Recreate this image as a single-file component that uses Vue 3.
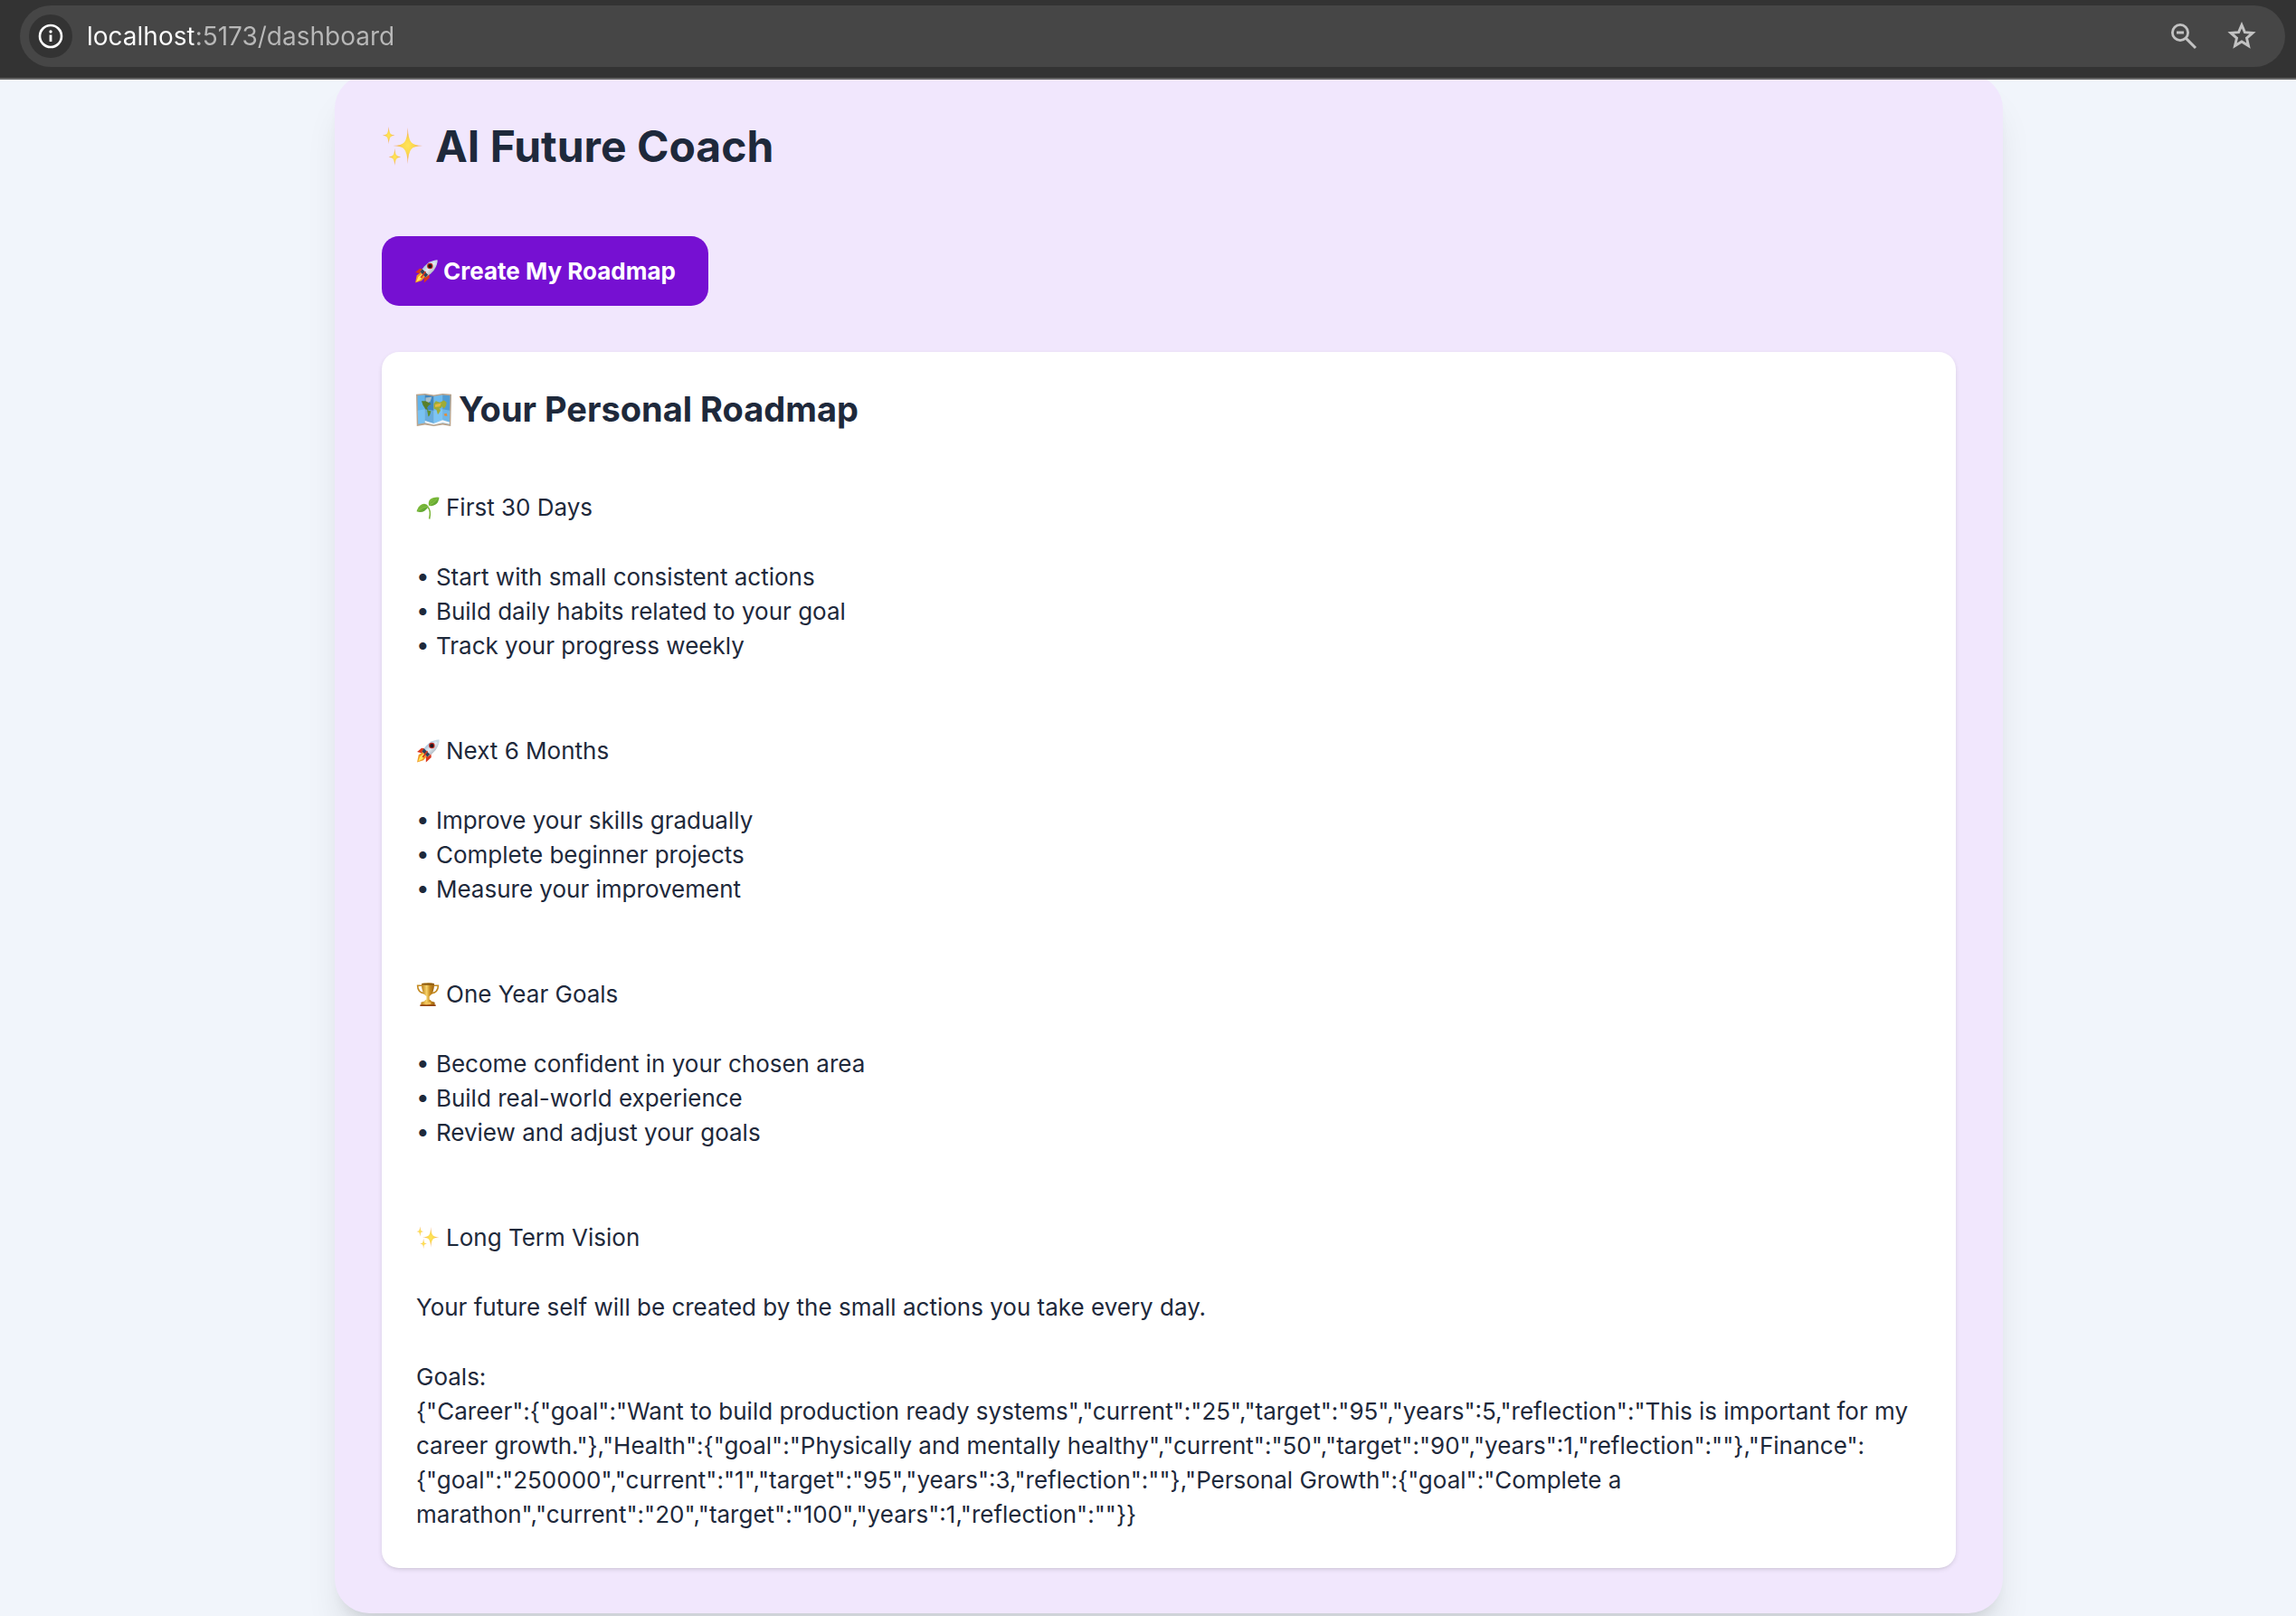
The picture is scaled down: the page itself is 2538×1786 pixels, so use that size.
<template>
  <div class="app">
    <header class="browser-bar">
      <div class="address">
        <button class="site-info" type="button" aria-label="Site information">
          <svg viewBox="0 0 28 28" width="28" height="28" fill="none" stroke="#ffffff">
            <circle cx="14" cy="14" r="12" stroke-width="2.6" />
            <path d="M14 12.500v7.500" stroke-width="2.8" />
            <circle cx="14" cy="9" r="1.700" fill="#ffffff" stroke="none" />
          </svg>
        </button>
        <input v-model="url" class="url" type="text" aria-label="Address" spellcheck="false" />
        <button class="bar-button" type="button" aria-label="Zoom">
          <svg viewBox="0 0 32 32" width="32" height="32" fill="none" stroke="#c2c2c2">
            <circle cx="12" cy="12" r="8.6" stroke-width="2.8" />
            <path d="M8 12h8" stroke-width="3" />
            <path d="M18.4 18.4L29 29" stroke-width="3" />
          </svg>
        </button>
        <button class="bar-button" type="button" aria-label="Bookmark this page">
          <svg viewBox="0 0 32 32" width="32" height="32" fill="none" stroke="#c2c2c2">
            <path
              d="M16 3.600l3.400 8 8.700.8-6.600 5.700 2 8.500-7.500-4.600-7.500 4.600 2-8.500-6.600-5.700 8.700-.8z"
              stroke-width="2.900"
            />
          </svg>
        </button>
      </div>
    </header>

    <!-- Shared emoji artwork -->
    <svg class="sprite" aria-hidden="true">
      <defs>
        <radialGradient id="spark">
          <stop offset="0" stop-color="#ffe45a" />
          <stop offset="0.4" stop-color="#fbd84e" />
          <stop offset="1" stop-color="#ee9560" />
        </radialGradient>
        <linearGradient id="hull" x1="0" y1="0" x2="1" y2="1">
          <stop offset="0" stop-color="#4f86b4" />
          <stop offset="0.5" stop-color="#e4edf4" />
          <stop offset="1" stop-color="#6b7883" />
        </linearGradient>
        <linearGradient id="gold" x1="0" y1="0" x2="1" y2="0">
          <stop offset="0" stop-color="#b97a14" />
          <stop offset="0.4" stop-color="#f6d36a" />
          <stop offset="0.65" stop-color="#c98d1f" />
          <stop offset="1" stop-color="#9b600d" />
        </linearGradient>
        <linearGradient id="leaf" x1="0" y1="0" x2="1" y2="1">
          <stop offset="0" stop-color="#8fc63f" />
          <stop offset="1" stop-color="#4d9a2b" />
        </linearGradient>
      </defs>
      <symbol id="sparkles" viewBox="0 0 48 48">
        <g fill="url(#spark)">
          <path d="M30 2Q30.500 15 34 19Q37 22.500 47 23Q37 23.500 34 27Q30.500 31 30 44Q29.500 31 26 27Q23 23.500 13 23Q23 22.500 26 19Q29.500 15 30 2z" />
          <path d="M8 1Q8.500 7 10 9Q11.500 10.500 15 11Q11.500 11.500 10 13Q8.500 15 8 21Q7.500 15 6 13Q4.500 11.500 1 11Q4.500 10.500 6 9Q7.500 7 8 1z" />
          <path d="M15 26Q15.500 32 17 34Q18.500 35.500 22 36Q18.500 36.500 17 38Q15.500 40 15 46Q14.500 40 13 38Q11.500 36.500 8 36Q11.500 35.500 13 34Q14.500 32 15 26z" />
        </g>
      </symbol>
      <symbol id="rocket" viewBox="0 0 48 48">
        <path d="M2 26L11 18L21 19L14 29z" fill="#d9371f" />
        <path d="M20 34L30 26L31 37L20 47z" fill="#d9371f" />
        <path d="M5 32L15 25L23 33L15 43L2 47z" fill="#f19a25" />
        <path d="M8 35L15 29L19 33L12 41L4 45z" fill="#ffec5c" />
        <path d="M47 1Q31 1 20 14L12 25L23 36L34 28Q47 17 47 1z" fill="url(#hull)" />
        <path d="M39 2Q43 1 47 1Q47 5 46 9Q42 7 39 2z" fill="#c9dbe6" />
        <path d="M12 25L16 19L28 31L23 36z" fill="#2e4358" />
        <circle cx="32" cy="13" r="6" fill="#c32b22" />
        <circle cx="32" cy="13" r="4" fill="#1c1720" />
        <path d="M12 36L22 23L24 25L15 38z" fill="#d9371f" />
      </symbol>
      <symbol id="sprout" viewBox="0 0 48 48">
        <path d="M24 23Q31 30 27 47" fill="none" stroke="#7cb63c" stroke-width="3" />
        <path d="M26 20Q23 7 34 4Q41 2 47 3Q46 14 39 18Q33 22 26 20z" fill="url(#leaf)" />
        <path d="M25 21Q20 14 12 17Q4 21 1 32Q10 35 17 31Q23 27 25 21z" fill="url(#leaf)" />
        <path d="M25 21Q35 15 44 5M24 21Q14 23 4 30" fill="none" stroke="#a5d45c" stroke-width="1" />
      </symbol>
      <symbol id="trophy" viewBox="0 0 48 48">
        <path
          d="M12 6H3Q3 20 17 22M36 6h9Q45 20 31 22"
          fill="none"
          stroke="#c48a20"
          stroke-width="3"
        />
        <path d="M11 2Q24 -1 37 2Q37 22 27 28L27 35H21L21 28Q11 22 11 2z" fill="url(#gold)" />
        <ellipse cx="24" cy="3" rx="12" ry="2" fill="#8c5a10" />
        <path d="M17 38Q18 34 24 34Q30 34 31 38L38 40V47H10V40z" fill="url(#gold)" />
        <path d="M8 45h32v3H8z" fill="#92400e" />
        <path d="M18 40h12v4H18z" fill="#f3c45b" />
      </symbol>
      <symbol id="map" viewBox="0 0 52 48">
        <path d="M0 1L13 0L26 2L39 0L52 1L51 48L39 46L26 48L13 46L1 48z" fill="#b9a48d" />
        <path d="M2 3L13 2V43L3 45z" fill="#62b4ec" />
        <path d="M13 2L26 4V45L13 43z" fill="#3f86c0" />
        <path d="M26 4L39 2V43L26 45z" fill="#6ab9ee" />
        <path d="M39 2L50 3L49 45L39 43z" fill="#4f9cd4" />
        <path d="M2 25L13 23L26 25L39 23L50 25L49 45L39 43L26 45L13 43L3 45z" fill="#8fd0fa" opacity="0.5" />
        <path d="M14 6L23 5L21 11L17 14L14 11z" fill="#a9bfc9" />
        <path d="M8 11L14 11L22 15L18 18L16 21L18 24L14 23L10 17z" fill="#587f2b" />
        <path d="M16 24L22 26L20 32L18 34z" fill="#5f8e2c" />
        <path d="M26 15L29 11L35 13L41 10L45 13L44 18L41 22L38 19L36 22L34 21L36 25L32 31L30 24L26 22z" fill="#9eab37" />
        <path d="M28 16L37 14L35 19L28 20z" fill="#e4b83f" />
        <path d="M41 30L45 29L46 33L42 33z" fill="#e18d3c" />
        <path d="M13 40L26 44L39 39L49 42V45L39 43L26 46L13 43z" fill="#f1f6fa" />
      </symbol>
    </svg>

    <main class="page">
      <section class="coach">
        <h1 class="coach-title">
          <svg class="emoji emoji-lg" aria-hidden="true"><use href="#sparkles" /></svg>
          AI Future Coach
        </h1>

        <button class="create" type="button">
          <svg class="emoji" aria-hidden="true"><use href="#rocket" /></svg>
          Create My Roadmap
        </button>

        <article class="roadmap">
          <h2 class="roadmap-title">
            <svg class="emoji emoji-md" aria-hidden="true"><use href="#map" /></svg>
            Your Personal Roadmap
          </h2>

          <section v-for="phase in phases" :key="phase.title" class="phase">
            <h3 class="phase-title">
              <svg class="emoji" aria-hidden="true"><use :href="'#' + phase.icon" /></svg>
              {{ phase.title }}
            </h3>
            <ul class="steps">
              <li v-for="step in phase.steps" :key="step">• {{ step }}</li>
            </ul>
          </section>

          <section>
            <h3 class="phase-title">
              <svg class="emoji" aria-hidden="true"><use href="#sparkles" /></svg>
              Long Term Vision
            </h3>
            <p class="vision">
              Your future self will be created by the small actions you take every day.
            </p>
            <p class="goals-label">Goals:</p>
            <p class="goals">{{ JSON.stringify(goals) }}</p>
          </section>
        </article>
      </section>
    </main>
  </div>
</template>

<script setup>
import { ref } from "vue";

const url = ref("localhost:5173/dashboard");

const phases = [
  {
    icon: "sprout",
    title: "First 30 Days",
    steps: [
      "Start with small consistent actions",
      "Build daily habits related to your goal",
      "Track your progress weekly",
    ],
  },
  {
    icon: "rocket",
    title: "Next 6 Months",
    steps: [
      "Improve your skills gradually",
      "Complete beginner projects",
      "Measure your improvement",
    ],
  },
  {
    icon: "trophy",
    title: "One Year Goals",
    steps: [
      "Become confident in your chosen area",
      "Build real-world experience",
      "Review and adjust your goals",
    ],
  },
];

const goals = {
  Career: {
    goal: "Want to build production ready systems",
    current: "25",
    target: "95",
    years: 5,
    reflection: "This is important for my career growth.",
  },
  Health: {
    goal: "Physically and mentally healthy",
    current: "50",
    target: "90",
    years: 1,
    reflection: "",
  },
  Finance: {
    goal: "250000",
    current: "1",
    target: "95",
    years: 3,
    reflection: "",
  },
  "Personal Growth": {
    goal: "Complete a marathon",
    current: "20",
    target: "100",
    years: 1,
    reflection: "",
  },
};
</script>

<style>
body {
  background: #f1f5fb;
}
</style>

<style scoped>
.app {
  min-height: 100vh;
  overflow: hidden;
  font-family: Inter, "Liberation Sans", sans-serif;
  color: #1e293b;
}

.sprite {
  position: absolute;
  width: 0;
  height: 0;
}

.browser-bar {
  position: relative;
  z-index: 1;
  padding: 6px 12px 12px 22px;
  background: #333333;
  border-bottom: 2px solid #666666;
}

.address {
  display: flex;
  align-items: center;
  gap: 16px;
  height: 68px;
  padding: 0 24px 0 10px;
  border-radius: 34px;
  background: #464646;
}

.address button {
  display: flex;
  align-items: center;
  justify-content: center;
  width: 48px;
  height: 48px;
  padding: 0;
  border: 0;
  border-radius: 50%;
  background: transparent;
}

.address .site-info {
  background: #333333;
}

.url {
  flex: 1;
  min-width: 0;
  height: 48px;
  padding: 0;
  border: 0;
  outline: 0;
  font-family: inherit;
  font-size: 28px;
  color: #ffffff;
  /* host is bright, the rest of the address is dimmed */
  background: linear-gradient(90deg, #ffffff 118px, #b8b8b8 118px);
  background-clip: text;
  -webkit-text-fill-color: transparent;
}

.page {
  padding: 0 324px 0 370px;
}

.coach {
  margin-top: -6px;
  padding: 52px 52px 50px;
  border-radius: 38px;
  background: #f1e7fd;
  box-shadow:
    0 32px 40px -8px rgba(0, 0, 0, 0.1),
    0 12px 16px -10px rgba(0, 0, 0, 0.1);
}

.emoji {
  flex: none;
  width: 26px;
  height: 26px;
}

.emoji-md {
  width: 39px;
  height: 36px;
}

.emoji-lg {
  width: 46px;
  height: 46px;
}

.coach-title,
.roadmap-title,
.phase-title,
.create {
  display: flex;
  align-items: center;
}

.coach-title {
  gap: 13px;
  margin: 0 0 71px;
  font-size: 48px;
  line-height: 56px;
  font-weight: 700;
}

.create {
  gap: 6px;
  padding: 19px 36px;
  border: 0;
  border-radius: 19px;
  background: #7610d2;
  color: #ffffff;
  font-family: inherit;
  font-size: 26px;
  line-height: 39px;
  font-weight: 700;
  cursor: pointer;
}

.roadmap {
  margin-top: 51px;
  padding: 38px 38px 40px;
  border-radius: 19px;
  background: #ffffff;
  box-shadow:
    0 2px 5px rgba(0, 0, 0, 0.1),
    0 2px 3px -2px rgba(0, 0, 0, 0.1);
}

.roadmap-title {
  gap: 8px;
  margin: 0 0 64px;
  font-size: 38px;
  line-height: 51px;
  font-weight: 700;
}

.phase-title {
  gap: 7px;
  margin: 0 0 39px;
  font-size: 26px;
  line-height: 38px;
  font-weight: 400;
}

.phase {
  padding-bottom: 78px;
}

.steps {
  margin: 0;
  padding: 0;
  list-style: none;
  font-size: 26px;
  line-height: 38px;
}

.vision,
.goals-label,
.goals {
  margin: 0;
  font-size: 26px;
  line-height: 38px;
}

.vision {
  margin-bottom: 39px;
}
</style>
